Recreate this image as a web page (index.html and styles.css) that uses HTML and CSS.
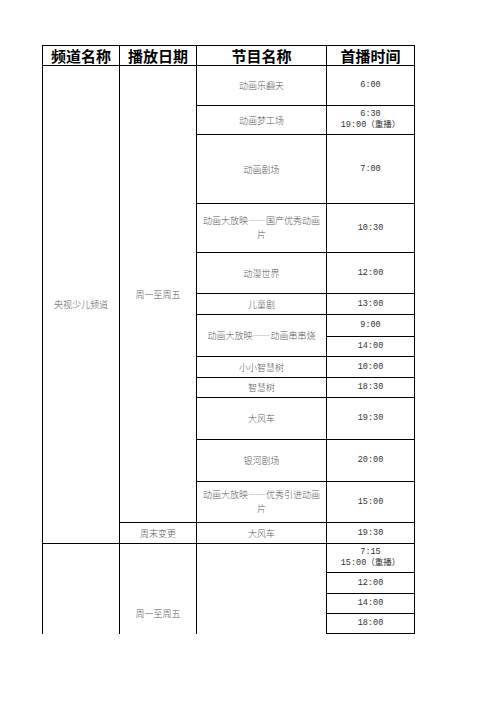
FILE: index.html
```html
<!DOCTYPE html>
<html lang="zh">
<head>
<meta charset="utf-8">
<link rel="stylesheet" href="styles.css">
</head>
<body>
<table class="sched">
  <colgroup>
    <col class="c1"><col class="c2"><col class="c3"><col class="c4">
  </colgroup>
  <tr class="h20 head">
    <th>频道名称</th><th>播放日期</th><th>节目名称</th><th>首播时间</th>
  </tr>
  <tr class="h40">
    <td rowspan="14">央视少儿频道</td>
    <td rowspan="13">周一至周五</td>
    <td>动画乐翻天</td><td class="t">6:00</td>
  </tr>
  <tr class="h29"><td>动画梦工场</td><td class="t">6:30<br>19:00（重播）</td></tr>
  <tr class="h69"><td>动画剧场</td><td class="t">7:00</td></tr>
  <tr class="h49"><td class="two">动画大放映——国产优秀动画<br>片</td><td class="t">10:30</td></tr>
  <tr class="h41"><td>动漫世界</td><td class="t">12:00</td></tr>
  <tr class="h21"><td>儿童剧</td><td class="t">13:00</td></tr>
  <tr class="h22"><td rowspan="2">动画大放映——动画串串烧</td><td class="t">9:00</td></tr>
  <tr class="h20"><td class="t">14:00</td></tr>
  <tr class="h21"><td>小小智慧树</td><td class="t">10:00</td></tr>
  <tr class="h20"><td>智慧树</td><td class="t">18:30</td></tr>
  <tr class="h42"><td>大风车</td><td class="t">19:30</td></tr>
  <tr class="h42"><td>银河剧场</td><td class="t">20:00</td></tr>
  <tr class="h41"><td class="two">动画大放映——优秀引进动画<br>片</td><td class="t">15:00</td></tr>
  <tr class="h21"><td>周末变更</td><td>大风车</td><td class="t">19:30</td></tr>
  <tr class="h29">
    <td rowspan="4" class="open"></td>
    <td rowspan="4" class="open low">周一至周五</td>
    <td rowspan="4" class="open"></td>
    <td class="t">7:15<br>15:00（重播）</td>
  </tr>
  <tr class="h21"><td class="t">12:00</td></tr>
  <tr class="h20"><td class="t">14:00</td></tr>
  <tr class="h20"><td class="t">18:00</td></tr>
</table>
</body>
</html>
```
FILE: styles.css
```css
html, body {
  margin: 0;
  padding: 0;
  background: #ffffff;
}
body {
  padding: 45px 0 0 42px;
}
.sched {
  border-collapse: collapse;
  table-layout: fixed;
  width: 372px;
  font-family: "Noto Sans CJK SC", "DejaVu Sans", sans-serif;
}
.c1 { width: 77px; }
.c2 { width: 77px; }
.c3 { width: 130px; }
.c4 { width: 88px; }
.sched th, .sched td {
  border: 1px solid #000;
  padding: 0 2px;
  text-align: center;
  vertical-align: middle;
  overflow: hidden;
}
.sched th {
  font-size: 15px;
  line-height: 18px;
  font-weight: 700;
  color: #000;
}
.sched td {
  font-size: 9px;
  line-height: 11px;
  font-weight: 300;
  color: #5a5a5a;
}
.sched td.two {
  line-height: 14px;
}
.sched td.t {
  font-family: "Liberation Mono", "Noto Sans CJK SC", monospace;
  font-size: 8.5px;
  line-height: 11px;
  font-weight: 400;
  color: #333;
}
.sched td.open {
  border-bottom: none;
}
.sched td.low {
  vertical-align: bottom;
  padding-bottom: 15px;
}
.h20 { height: 20px; }
.h21 { height: 21px; }
.h22 { height: 22px; }
.h29 { height: 29px; }
.h40 { height: 40px; }
.h41 { height: 41px; }
.h42 { height: 42px; }
.h49 { height: 49px; }
.h69 { height: 69px; }
```
